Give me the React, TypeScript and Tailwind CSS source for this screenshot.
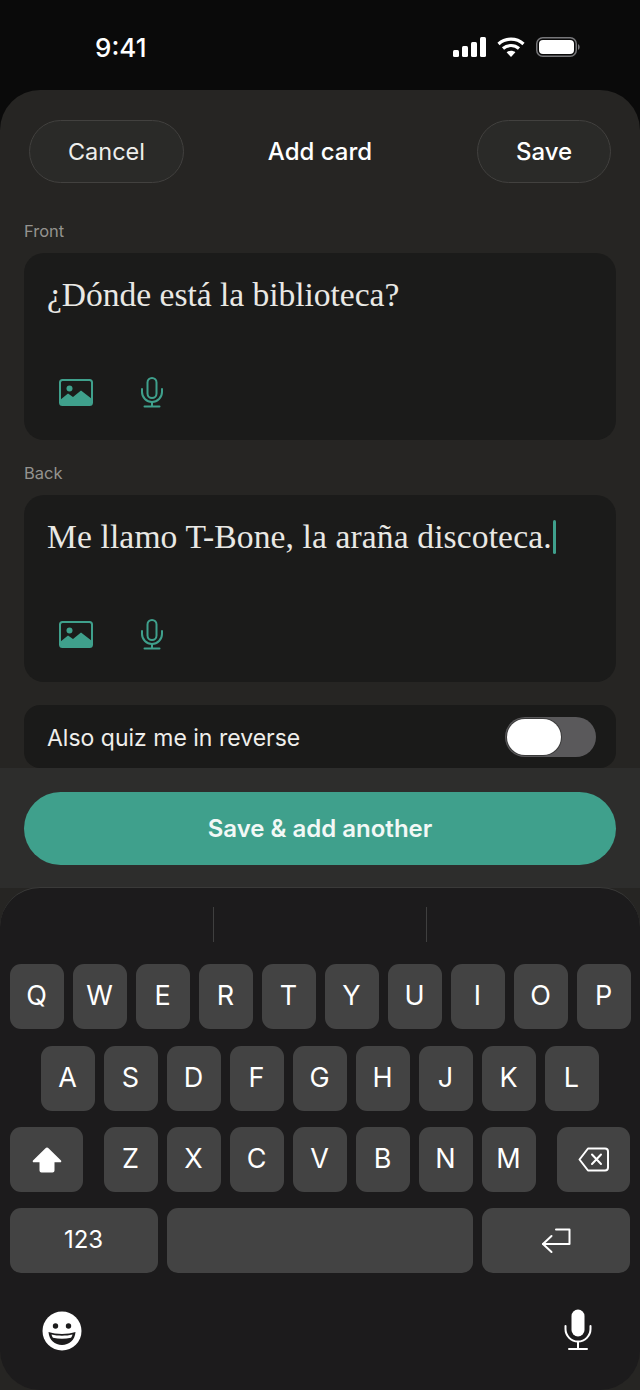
import React from "react";

const sans = "font-['Inter','Liberation_Sans',sans-serif]";

function ImageIcon() {
  return (
    <svg width="34" height="27" viewBox="0 0 34 27" fill="none">
      <rect x="1" y="1" width="32" height="25" rx="2.5" stroke="#3fa08c" strokeWidth="2" />
      <circle cx="10.5" cy="9.5" r="3" fill="#3fa08c" />
      <path d="M1 21 L9 14.5 L14 18 L22 11.5 L33 20 V24 a2 2 0 0 1 -2 2 H3 a2 2 0 0 1 -2 -2 Z" fill="#3fa08c" />
    </svg>
  );
}

function MicIcon() {
  return (
    <svg width="22" height="31" viewBox="0 0 22 31" fill="none" stroke="#3fa08c" strokeWidth="2" strokeLinecap="round">
      <rect x="6.5" y="1" width="9" height="20" rx="4.5" />
      <path d="M1 12 V15 a10 10 0 0 0 20 0 V12" />
      <path d="M11 25 V29.5 M3.5 29.5 H18.5" />
    </svg>
  );
}

function Field({ label, text, cursor, top }: { label: string; text: string; cursor?: boolean; top: string }) {
  return (
    <div className={`flex flex-col ${top}`}>
      <div className={`${sans} text-[16.5px] leading-[20px] text-[#94938f]`}>{label}</div>
      <div className="mt-[12px] flex h-[187px] flex-col rounded-[20px] bg-[#1b1b1a] px-[23px] pt-[22px]">
        <div className="flex h-[40px] items-center font-['Liberation_Serif',serif] text-[33.6px] leading-[40px] text-[#e9e8e4]">
          <span className={cursor ? "tracking-[0.11px]" : "tracking-[-0.04px]"}>{text}</span>
          {cursor && <span className="ml-[1px] h-[34px] w-[3px] rounded-full bg-[#3fa08c]" />}
        </div>
        <div className="mt-[62px] flex items-center pl-[12px]">
          <ImageIcon />
          <div className="ml-[48px]">
            <MicIcon />
          </div>
        </div>
      </div>
    </div>
  );
}

function Key({ label, w = "w-[54px]" }: { label?: string; w?: string }) {
  return (
    <div className={`flex h-[65px] ${w} shrink-0 items-center justify-center rounded-[11px] bg-[#434343] pb-[2px] pr-[1px] ${sans} text-[27px] leading-none text-white`}>
      {label}
    </div>
  );
}

function IconKey({ w, children }: { w: string; children: React.ReactNode }) {
  return (
    <div className={`flex h-[65px] ${w} shrink-0 items-center justify-center rounded-[11px] bg-[#434343]`}>{children}</div>
  );
}

export default function App() {
  return (
    <div className={`flex h-[1390px] w-[640px] flex-col overflow-hidden bg-[#0a0a0a] ${sans}`}>
      {/* Status bar */}
      <div className="flex h-[90px] shrink-0 items-start pt-[31px]">
        <div className="ml-[95px] text-[26px] font-medium leading-[34px] text-white">9:41</div>
        <div className="ml-auto mr-[59px] mt-[6px] flex items-center">
          <svg width="33" height="20" viewBox="0 0 33 20" fill="#fff">
            <rect x="0" y="13" width="6" height="7" rx="1.5" />
            <rect x="9" y="9" width="6" height="11" rx="1.5" />
            <rect x="18" y="5" width="6" height="15" rx="1.5" />
            <rect x="27" y="0" width="6" height="20" rx="1.5" />
          </svg>
          <svg className="ml-[11px]" width="28" height="20" viewBox="0 0 28 20" fill="none" stroke="#fff" strokeWidth="3.2">
            <path d="M1.5 7 C8.5 0.5 19.5 0.5 26.5 7" />
            <path d="M6 11.5 C10.5 7.5 17.5 7.5 22 11.5" />
            <path d="M14 20 L9.6 15.3 C12 13.3 16 13.3 18.4 15.3 Z" fill="#fff" stroke="none" />
          </svg>
          <svg className="ml-[11px]" width="45" height="20" viewBox="0 0 45 20" fill="none">
            <rect x="0.75" y="0.75" width="39.5" height="18.5" rx="6" stroke="#77777a" strokeWidth="1.5" />
            <rect x="3" y="3" width="35" height="14" rx="4" fill="#fff" />
            <path d="M42 7 a3.5 3.5 0 0 1 0 6 Z" fill="#77777a" />
          </svg>
        </div>
      </div>

      {/* Sheet */}
      <div className="flex min-h-0 flex-1 flex-col overflow-hidden rounded-t-[40px] bg-[#262523]">
        <div className="px-[24px]">
          {/* Nav */}
          <div className="mt-[30px] grid h-[63px] grid-cols-[155px_1fr_134px] items-center px-[5px]">
            <div className="flex h-[63px] items-center justify-center rounded-full border border-[#42413f] bg-[#2a2a28] text-[23.5px] text-[#eeeeeb]">
              Cancel
            </div>
            <div className="pr-[21px] text-center text-[24px] font-medium text-white">Add card</div>
            <div className="flex h-[63px] items-center justify-center rounded-full border border-[#42413f] bg-[#2a2a28] text-[24px] font-medium text-white">
              Save
            </div>
          </div>

          <Field top="mt-[38px]" label="Front" text="¿Dónde está la biblioteca?" />
          <Field top="mt-[23px]" label="Back" text="Me llamo T-Bone, la araña discoteca." cursor />

          {/* Reverse toggle */}
          <div className="mt-[23px] flex h-[63px] items-center justify-between rounded-[16px] bg-[#1a1a19] pl-[23px] pr-[20px]">
            <span className="pt-[4px] text-[23px] text-[#efeeeb]">Also quiz me in reverse</span>
            <div className="flex h-[40px] w-[91px] items-center rounded-full bg-[#5a595b] pl-[2px]">
              <div className="h-[36px] w-[54px] rounded-full bg-white shadow-[0_0_0_1px_#3a3a3a]" />
            </div>
          </div>
        </div>

        {/* Footer */}
        <div className="flex h-[120px] shrink-0 items-start bg-[#2d2d2c] px-[24px] pt-[24px]">
          <div className="flex h-[73px] w-full items-center justify-center rounded-full bg-[#3fa08c] text-[24px] font-semibold text-[#f2f8f6]">
            Save &amp; add another
          </div>
        </div>

        {/* Keyboard */}
        <div className="-mt-px flex flex-1 flex-col rounded-[40px] border-t border-[#3a3a39] bg-[#1c1b1c] px-[10px]">
          <div className="flex h-[76px] shrink-0 items-start justify-center gap-[212px] pt-[19px]">
            <div className="h-[35px] w-px bg-[#3f3f3f]" />
            <div className="h-[35px] w-px bg-[#3f3f3f]" />
          </div>
          <div className="flex gap-[9px]">
            {"QWERTYUIOP".split("").map((k) => (
              <Key key={k} label={k} />
            ))}
          </div>
          <div className="mt-[17px] flex justify-center gap-[9px]">
            {"ASDFGHJKL".split("").map((k) => (
              <Key key={k} label={k} />
            ))}
          </div>
          <div className="mt-[16px] flex">
            <IconKey w="w-[73px]">
              <svg width="30" height="26" viewBox="0 0 30 26" fill="#fff">
                <path d="M15 0.5 a2 2 0 0 1 1.5 .7 L29 13.5 a1 1 0 0 1 -.8 1.7 H22.5 V23.5 a2 2 0 0 1 -2 2 H9.5 a2 2 0 0 1 -2 -2 V15.2 H1.8 a1 1 0 0 1 -.8 -1.7 L13.5 1.2 A2 2 0 0 1 15 .5 Z" />
              </svg>
            </IconKey>
            <div className="ml-[21px] flex gap-[9px]">
              {"ZXCVBNM".split("").map((k) => (
                <Key key={k} label={k} />
              ))}
            </div>
            <div className="ml-[21px]">
              <IconKey w="w-[73px]">
                <svg width="31" height="25" viewBox="0 0 31 25" fill="none" stroke="#fff" strokeWidth="2" strokeLinejoin="round" strokeLinecap="round">
                  <path d="M10 1.5 H27 a3 3 0 0 1 3 3 V20.5 a3 3 0 0 1 -3 3 H10 L1.5 12.5 Z" />
                  <path d="M14 7.5 L23 17 M23 7.5 L14 17" />
                </svg>
              </IconKey>
            </div>
          </div>
          <div className="mt-[16px] flex gap-[9px]">
            <Key label="123" w="w-[148px] !text-[24px]" />
            <Key w="w-[306px]" />
            <IconKey w="w-[148px]">
              <svg width="30" height="26" viewBox="0 0 30 26" fill="none" stroke="#fff" strokeWidth="2" strokeLinecap="round" strokeLinejoin="round">
                <path d="M15 1.5 H28.5 V16 H2" />
                <path d="M10.5 8 L2 16 L10.5 24" />
              </svg>
            </IconKey>
          </div>
          <div className="mt-[37px] flex items-start justify-between pl-[32px] pr-[38px]">
            <svg className="mt-[1px]" width="40" height="40" viewBox="0 0 40 40">
              <circle cx="20" cy="20" r="19.5" fill="#fff" />
              <circle cx="13.5" cy="15" r="2.7" fill="#1c1b1c" />
              <circle cx="26.5" cy="15" r="2.7" fill="#1c1b1c" />
              <path d="M6.5 21 C14 23.5 26 23.5 33.5 21 C33 29 27 34 20 34 C13 34 7 29 6.5 21 Z" fill="#1c1b1c" />
              <path d="M9.5 23.6 C16 25.2 24 25.2 30.5 23.6 C30 25.5 29.5 26 29 26.8 C23 28 17 28 11 26.8 C10.5 26 10 25.5 9.5 23.6 Z" fill="#fff" />
            </svg>
            <svg className="-mt-[1px]" width="28" height="41" viewBox="0 0 28 41" fill="none" stroke="#fff" strokeWidth="2" strokeLinecap="round">
              <rect x="7.5" y="0.5" width="13" height="27" rx="6.5" fill="#fff" stroke="none" />
              <path d="M1.5 17 V20 a12.5 12.5 0 0 0 25 0 V17" />
              <path d="M14 33 V40 M5 40 H23" />
            </svg>
          </div>
        </div>
      </div>
    </div>
  );
}
